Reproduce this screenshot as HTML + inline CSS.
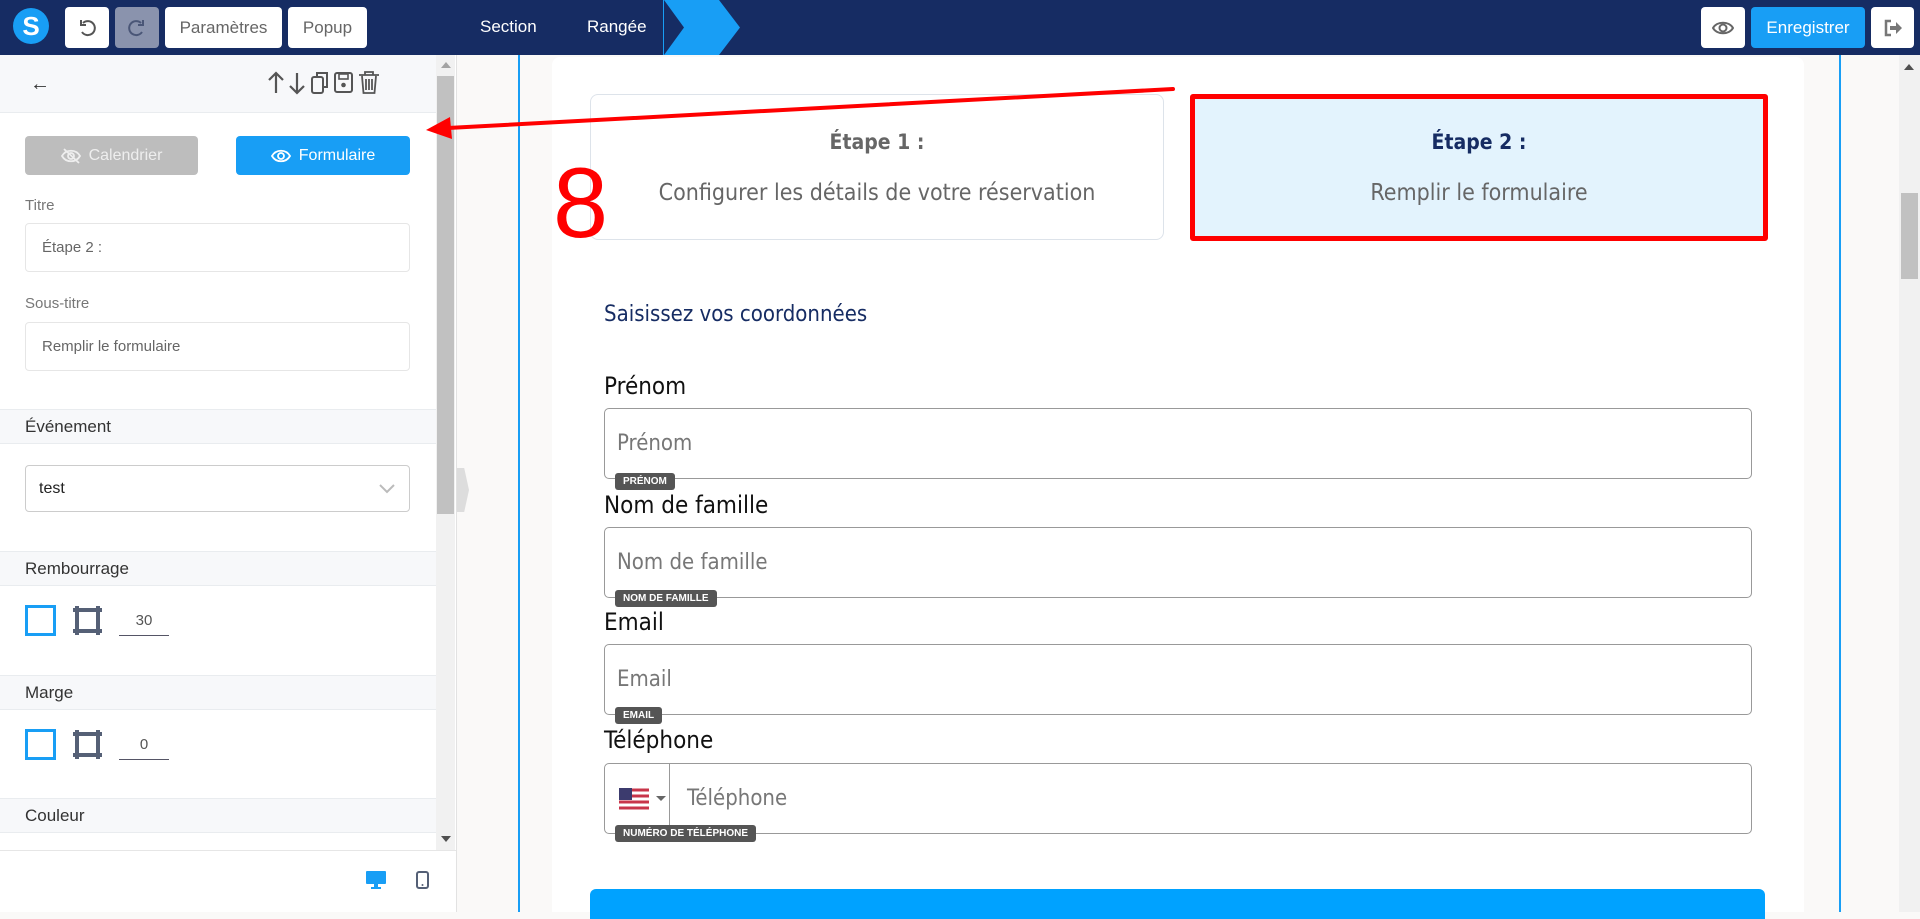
<!DOCTYPE html>
<html><head><meta charset="utf-8"><style>
*{box-sizing:border-box;margin:0;padding:0}
body{width:1920px;height:912px;overflow:hidden;position:relative;font-family:"Liberation Sans",sans-serif;background:#faf9f8}
.abs{position:absolute}
.top{left:0;top:0;width:1920px;height:55px;background:#162c63}
.tb{position:absolute;top:7px;height:41px;background:#fff;border-radius:4px;color:#666;font-size:17px;display:flex;align-items:center;justify-content:center}
.side{left:0;top:55px;width:457px;height:857px;background:#fff;border-right:1px solid #e2e2e2}
.lbl{position:absolute;left:25px;font-size:15px;color:#777}
.inp{position:absolute;left:25px;width:385px;border:1px solid #e6e6e6;border-radius:4px;font-size:15px;color:#666;padding-left:16px;display:flex;align-items:center}
.band{position:absolute;left:0;width:436px;height:35px;background:#f7f8fa;border-top:1px solid #e9ecef;border-bottom:1px solid #e9ecef;font-size:17px;color:#333;padding-left:25px;line-height:33px}
.sq{position:absolute;left:25px;width:31px;height:31px;border:3px solid #189ef5}
.num{position:absolute;left:119px;width:50px;border-bottom:1px solid #556;text-align:center;font-size:15px;color:#555}
.flbl{position:absolute;left:604px;font-size:24px;color:#111;font-family:"DejaVu Sans Condensed","Liberation Sans",sans-serif}
.finp{position:absolute;left:604px;width:1148px;height:71px;border:1px solid #999;border-radius:5px;font-size:22px;color:#777;padding-left:12px;display:flex;align-items:center;font-family:"DejaVu Sans Condensed","Liberation Sans",sans-serif}
.tag{position:absolute;left:615px;height:17px;background:#555;color:#fff;font-size:10px;font-weight:bold;border-radius:3px;padding:0 8px;line-height:17px}
.step{position:absolute;text-align:center;font-family:"DejaVu Sans Condensed","Liberation Sans",sans-serif}
</style></head><body>
<div class="abs top"></div>
<div class="abs" style="left:13px;top:8px;width:36px;height:36px;border-radius:50%;background:#189ef5;color:#fff;font-weight:bold;font-size:26px;text-align:center;line-height:36px">S</div>
<div class="tb" style="left:65px;width:44px"><svg width="20" height="20" viewBox="0 0 20 20"><path d="M6 5a7 7 0 1 1-1 9" fill="none" stroke="#555" stroke-width="2"/><path d="M4 2v5h5" fill="none" stroke="#555" stroke-width="2"/></svg></div>
<div class="tb" style="left:115px;width:44px;background:#8a93ad"><svg width="20" height="20" viewBox="0 0 20 20"><path d="M14 5a7 7 0 1 0 1 9" fill="none" stroke="#4a5677" stroke-width="2"/><path d="M16 2v5h-5" fill="none" stroke="#4a5677" stroke-width="2"/></svg></div>
<div class="tb" style="left:165px;width:117px">Paramètres</div>
<div class="tb" style="left:288px;width:79px">Popup</div>
<div class="abs" style="left:480px;top:17px;color:#fff;font-size:17px">Section</div>
<div class="abs" style="left:587px;top:17px;color:#fff;font-size:17px">Rangée</div>
<div class="abs" style="left:663px;top:0;width:1px;height:55px;background:#189ef5"></div>
<svg class="abs" style="left:664px;top:0" width="78" height="55"><polygon points="0,0 55,0 76,27.5 55,55 0,55 20,27.5" fill="#189ef5"/></svg>
<div class="tb" style="left:1701px;width:44px"><svg width="22" height="16" viewBox="0 0 22 16"><path d="M1 8C5 1 17 1 21 8 17 15 5 15 1 8z" fill="none" stroke="#666" stroke-width="2"/><circle cx="11" cy="8" r="3.5" fill="none" stroke="#666" stroke-width="2"/></svg></div>
<div class="tb" style="left:1751px;width:114px;background:#189ef5;color:#fff;font-size:17px">Enregistrer</div>
<div class="tb" style="left:1871px;width:43px"><svg width="20" height="18" viewBox="0 0 20 18"><path d="M8 2H3v14h5" fill="none" stroke="#777" stroke-width="2.5"/><path d="M7 7h6V3l6 6-6 6v-4H7z" fill="#777"/></svg></div>

<!-- sidebar -->
<div class="abs side"></div>
<div class="abs" style="left:0;top:55px;width:436px;height:58px;background:#f7f8fa;border-bottom:1px solid #e9ecef"></div>
<div class="abs" style="left:30px;top:73px;font-size:20px;color:#333">←</div>
<svg class="abs" style="left:266px;top:70px" width="140" height="26" viewBox="0 0 140 26">
<path d="M10 23V3M3 10l7-7 7 7" fill="none" stroke="#555" stroke-width="2.2"/>
<path d="M31 3v20M24 16l7 7 7-7" fill="none" stroke="#555" stroke-width="2.2"/>
<rect x="46" y="7" width="11" height="16" rx="2" fill="none" stroke="#555" stroke-width="2"/><path d="M51 6V3h10v14h-4" fill="none" stroke="#555" stroke-width="2"/>
<rect x="69" y="3" width="17" height="19" rx="2" fill="none" stroke="#555" stroke-width="2"/><rect x="73" y="4" width="9" height="5" fill="none" stroke="#555" stroke-width="1.6"/><circle cx="77.5" cy="15" r="2.3" fill="#555"/>
<path d="M93 5h20M99 5V2h8v3M96 6l1.5 17h11L110 6M100 9v11M103 9v11M106 9v11" fill="none" stroke="#555" stroke-width="1.8"/>
</svg>
<div class="abs" style="left:25px;top:136px;width:173px;height:39px;background:#bdbdbd;border-radius:4px;color:#eee;font-size:16px;display:flex;align-items:center;justify-content:center;gap:8px"><svg width="20" height="16"><path d="M1 8C5 1 15 1 19 8 15 15 5 15 1 8z" fill="none" stroke="#eee" stroke-width="1.8"/><circle cx="10" cy="8" r="3" fill="none" stroke="#eee" stroke-width="1.8"/><path d="M3 1l15 14" stroke="#eee" stroke-width="1.8"/></svg>Calendrier</div>
<div class="abs" style="left:236px;top:136px;width:174px;height:39px;background:#189ef5;border-radius:4px;color:#fff;font-size:16px;display:flex;align-items:center;justify-content:center;gap:8px"><svg width="20" height="16"><path d="M1 8C5 1 15 1 19 8 15 15 5 15 1 8z" fill="none" stroke="#fff" stroke-width="1.8"/><circle cx="10" cy="8" r="3" fill="none" stroke="#fff" stroke-width="1.8"/></svg>Formulaire</div>
<div class="lbl" style="top:197px">Titre</div>
<div class="inp" style="top:223px;height:49px">Étape 2 :</div>
<div class="lbl" style="top:295px">Sous-titre</div>
<div class="inp" style="top:322px;height:49px">Remplir le formulaire</div>
<div class="band" style="top:409px">Événement</div>
<div class="inp" style="top:465px;height:47px;border-color:#ccc;color:#222;font-size:16px;padding-left:13px">test<svg style="position:absolute;right:14px;top:18px" width="16" height="10"><path d="M1 1l7 7 7-7" fill="none" stroke="#bbb" stroke-width="2"/></svg></div>
<div class="band" style="top:551px">Rembourrage</div>
<div class="sq" style="top:605px"></div>
<svg class="abs" style="left:72px;top:605px" width="31" height="31"><path d="M5 1v29M26 1v29M1 5h29M1 26h29" stroke="#556076" stroke-width="4"/></svg>
<div class="num" style="top:612px;height:24px">30</div>
<div class="band" style="top:675px">Marge</div>
<div class="sq" style="top:729px"></div>
<svg class="abs" style="left:72px;top:729px" width="31" height="31"><path d="M5 1v29M26 1v29M1 5h29M1 26h29" stroke="#556076" stroke-width="4"/></svg>
<div class="num" style="top:736px;height:24px">0</div>
<div class="band" style="top:798px">Couleur</div>
<div class="abs" style="left:0;top:850px;width:456px;height:1px;background:#e6e6e6"></div>
<svg class="abs" style="left:366px;top:871px" width="20" height="18"><rect x="0" y="0" width="20" height="13" rx="1" fill="#189ef5"/><rect x="8" y="13" width="4" height="3" fill="#189ef5"/><rect x="5" y="16" width="10" height="2" fill="#189ef5"/></svg>
<svg class="abs" style="left:416px;top:871px" width="13" height="18"><rect x="1" y="1" width="11" height="16" rx="2" fill="none" stroke="#556076" stroke-width="2"/><circle cx="6.5" cy="14" r="1" fill="#556076"/></svg>
<!-- side scrollbar -->
<div class="abs" style="left:436px;top:55px;width:19px;height:795px;background:#f1f1f1"></div>
<div class="abs" style="left:437px;top:76px;width:17px;height:438px;background:#c1c1c1"></div>
<div class="abs" style="left:441px;top:62px;width:0;height:0;border-left:5px solid transparent;border-right:5px solid transparent;border-bottom:6px solid #a3a3a3"></div>
<div class="abs" style="left:441px;top:836px;width:0;height:0;border-left:5px solid transparent;border-right:5px solid transparent;border-top:6px solid #505050"></div>
<div class="abs" style="left:457px;top:468px;width:12px;height:44px;background:#ddd;clip-path:polygon(0 0,60% 0,100% 50%,60% 100%,0 100%)"></div>

<!-- canvas -->
<div class="abs" style="left:518px;top:55px;width:2px;height:857px;background:#189ef5"></div>
<div class="abs" style="left:1839px;top:55px;width:2px;height:857px;background:#189ef5"></div>
<div class="abs" style="left:552px;top:57px;width:1252px;height:855px;background:#fff;border-radius:8px 8px 0 0"></div>
<div class="abs" style="left:1899px;top:55px;width:21px;height:857px;background:#f1f1f1"></div>
<div class="abs" style="left:1901px;top:193px;width:17px;height:86px;background:#c1c1c1"></div>
<div class="abs" style="left:1904px;top:64px;width:0;height:0;border-left:5px solid transparent;border-right:5px solid transparent;border-bottom:6px solid #505050"></div>

<div class="abs" style="left:590px;top:94px;width:574px;height:146px;border:1px solid #dde3ea;border-radius:8px"></div>
<div class="step" style="left:590px;width:574px;top:130px;font-size:21px;font-weight:bold;color:#666">Étape 1 :</div>
<div class="step" style="left:590px;width:574px;top:180px;font-size:23px;color:#666">Configurer les détails de votre réservation</div>
<div class="abs" style="left:1190px;top:94px;width:578px;height:147px;background:#e3f3fd;border:5px solid #f00;border-radius:3px"></div>
<div class="step" style="left:1190px;width:578px;top:130px;font-size:21px;font-weight:bold;color:#162c63">Étape 2 :</div>
<div class="step" style="left:1190px;width:578px;top:180px;font-size:23px;color:#666">Remplir le formulaire</div>
<div class="abs" style="left:553px;top:148px;font-size:99px;color:#f00;line-height:110px">8</div>
<svg class="abs" style="left:420px;top:80px" width="760" height="60"><line x1="753" y1="9" x2="28" y2="48" stroke="#f00" stroke-width="4" stroke-linecap="round"/><polygon points="6,50 30,37 32,59" fill="#f00"/></svg>

<div class="abs" style="left:604px;top:302px;font-size:22px;color:#162c63;font-family:'DejaVu Sans Condensed','Liberation Sans',sans-serif">Saisissez vos coordonnées</div>
<div class="flbl" style="top:372px">Prénom</div>
<div class="finp" style="top:408px">Prénom</div>
<div class="tag" style="top:473px">PRÉNOM</div>
<div class="flbl" style="top:491px">Nom de famille</div>
<div class="finp" style="top:527px">Nom de famille</div>
<div class="tag" style="top:590px">NOM DE FAMILLE</div>
<div class="flbl" style="top:608px">Email</div>
<div class="finp" style="top:644px">Email</div>
<div class="tag" style="top:707px">EMAIL</div>
<div class="flbl" style="top:726px">Téléphone</div>
<div class="finp" style="top:763px;padding-left:82px">Téléphone</div>
<div class="abs" style="left:669px;top:764px;width:1px;height:69px;background:#999"></div>
<svg class="abs" style="left:619px;top:788px" width="32" height="22"><rect width="30" height="22" rx="3" fill="#fff"/><path d="M0 2h30M0 8h30M0 14h30M0 20h30" stroke="#c8354a" stroke-width="3"/><rect width="13" height="12" fill="#3c3b6e"/></svg>
<div class="abs" style="left:656px;top:796px;width:0;height:0;border-left:5px solid transparent;border-right:5px solid transparent;border-top:5px solid #666"></div>
<div class="tag" style="top:825px">NUMÉRO DE TÉLÉPHONE</div>
<div class="abs" style="left:590px;top:889px;width:1175px;height:30px;background:#00a2ff;border-radius:6px 6px 0 0"></div>
</body></html>
